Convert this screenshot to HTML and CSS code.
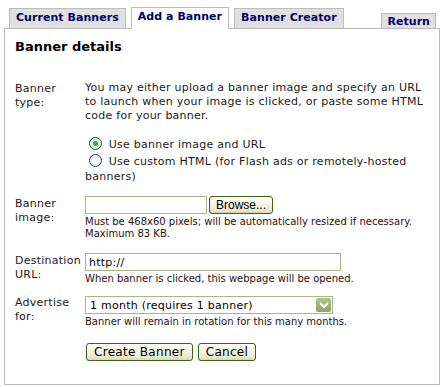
FILE: index.html
```html
<!DOCTYPE html>
<html lang="en">
<head>
    <meta charset="UTF-8">
    <title>Add a Banner</title>
    <link rel="stylesheet" href="styles.css">
</head>
<body>
    <div class="tabs">
        <a class="tab" href="#">Current Banners</a>
        <a class="tab active" href="#">Add a Banner</a>
        <a class="tab" href="#">Banner Creator</a>
        <a class="tab small" href="#">Return</a>
    </div>
    <div class="panel">
        <h1>Banner details</h1>
        <form class="form">
            <div class="label">Banner type:</div>
            <div class="field">
                <p class="intro">You may either upload a banner image and specify an URL to launch when your image is clicked, or paste some HTML code for your banner.</p>
                <label class="choice"><input type="radio" name="kind" checked> Use banner image and URL</label>
                <label class="choice"><input type="radio" name="kind"> Use custom HTML (for Flash ads or remotely-hosted banners)</label>
            </div>

            <div class="label">Banner image:</div>
            <div class="field">
                <div class="file-row">
                    <input type="text" class="text file-name">
                    <button type="button" class="btn browse">Browse...</button>
                </div>
                <div class="hint spaced">Must be 468x60 pixels; will be automatically resized if necessary. Maximum 83 KB.</div>
            </div>

            <div class="label">Destination URL:</div>
            <div class="field">
                <input type="text" class="text url" value="http://">
                <div class="hint">When banner is clicked, this webpage will be opened.</div>
            </div>

            <div class="label">Advertise for:</div>
            <div class="field">
                <div class="select-wrap">
                    <select class="text months">
                        <option>1 month (requires 1 banner)</option>
                    </select>
                    <span class="arrow">
                        <svg width="10" height="8" viewBox="0 0 10 8"><path d="M1 2 L5 6 L9 2" fill="none" stroke="#fff" stroke-width="2"/></svg>
                    </span>
                </div>
                <div class="hint">Banner will remain in rotation for this many months.</div>
            </div>

            <div></div>
            <div class="actions">
                <button type="submit" class="btn">Create Banner</button>
                <button type="button" class="btn">Cancel</button>
            </div>
        </form>
    </div>
</body>
</html>
```

FILE: styles.css
```css
body {
    margin: 0;
    padding: 8px 7px 4px 4px;
    font-family: "DejaVu Sans", Verdana, sans-serif;
    font-size: 11px;
    letter-spacing: 0.25px;
    color: #1a1a1a;
    background: #fff;
}

.tabs {
    display: flex;
    align-items: flex-end;
    padding-left: 5px;
    gap: 5px;
    height: 20px;
}

.tab {
    display: block;
    height: 19px;
    line-height: 18px;
    padding: 0 6px;
    background: #e0e0e0;
    border: 1px solid #bbb;
    border-bottom: none;
    color: #000066;
    font-weight: bold;
    font-size: 11px;
    letter-spacing: 0.05px;
    text-decoration: none;
    white-space: nowrap;
}

.tab.active {
    background: #fff;
    height: 21px;
    margin-bottom: -1px;
    position: relative;
    z-index: 1;
}

.tab.small {
    margin-left: auto;
    margin-right: 4px;
    height: 14px;
    line-height: 16px;
    padding: 0 5px;
}

.panel {
    border: 1px solid #bbb;
    padding: 10px 10px 21px 10px;
    height: 324px;
}

h1 {
    font-size: 13px;
    font-weight: bold;
    color: #000;
    letter-spacing: 0;
    margin: 0 0 27px;
}

.form {
    display: grid;
    grid-template-columns: 70px 1fr;
    row-gap: 10px;
}

.label {
    line-height: 14px;
    padding-top: 1px;
    width: 62px;
}

.field {
    min-width: 0;
}

.intro {
    margin: 0 0 14px;
    line-height: 14px;
}

.choice {
    display: block;
    line-height: 15px;
    margin-bottom: 2px;
}

.choice input {
    appearance: none;
    width: 13px;
    height: 13px;
    margin: 0 3px 0 4px;
    vertical-align: -2px;
    border: 1px solid #1c5180;
    border-radius: 50%;
    background: radial-gradient(circle, #fff 30%, #dcdcd4 100%);
}

.choice input:checked {
    background: radial-gradient(circle, #4bcc3e 0, #21a121 28%, #f4f4ee 32%, #dcdcd4 100%);
}

.file-row {
    display: flex;
    gap: 2px;
    height: 18px;
}

.text {
    box-sizing: border-box;
    height: 18px;
    border: 1px solid #a5b88a;
    font-family: "DejaVu Sans", Verdana, sans-serif;
    font-size: 11px;
    letter-spacing: 0.25px;
    color: #000;
    padding: 0 3px;
    background: #fff;
}

.file-name {
    width: 122px;
}

.url {
    width: 256px;
    display: block;
}

.hint {
    font-size: 10px;
    letter-spacing: 0;
    line-height: 12px;
    color: #2a1010;
    margin-top: 2px;
}

.hint.spaced {
    margin-bottom: 3px;
}

.select-wrap {
    position: relative;
    width: 248px;
    margin-top: 1px;
}

.months {
    appearance: none;
    width: 248px;
    padding-left: 4px;
    display: block;
}

.arrow {
    position: absolute;
    right: 2px;
    top: 2px;
    width: 15px;
    height: 14px;
    background: linear-gradient(#b0c294, #8ea46c);
    border-radius: 2px;
    display: flex;
    align-items: center;
    justify-content: center;
}

.btn {
    height: 18px;
    padding: 0 7px;
    border: 1px solid #3d6212;
    border-radius: 3px;
    background: linear-gradient(#fefef8, #ece9d6 80%, #d9d4b8);
    font-family: "DejaVu Sans", Verdana, sans-serif;
    font-size: 12px;
    letter-spacing: 0.3px;
    color: #000;
}

.browse {
    font-family: "Liberation Sans", Arial, sans-serif;
    font-size: 12px;
    letter-spacing: 0;
    padding: 0 5px;
    width: 64px;
}

.actions {
    display: flex;
    gap: 5px;
    padding-top: 5px;
    padding-left: 1px;
}
```
